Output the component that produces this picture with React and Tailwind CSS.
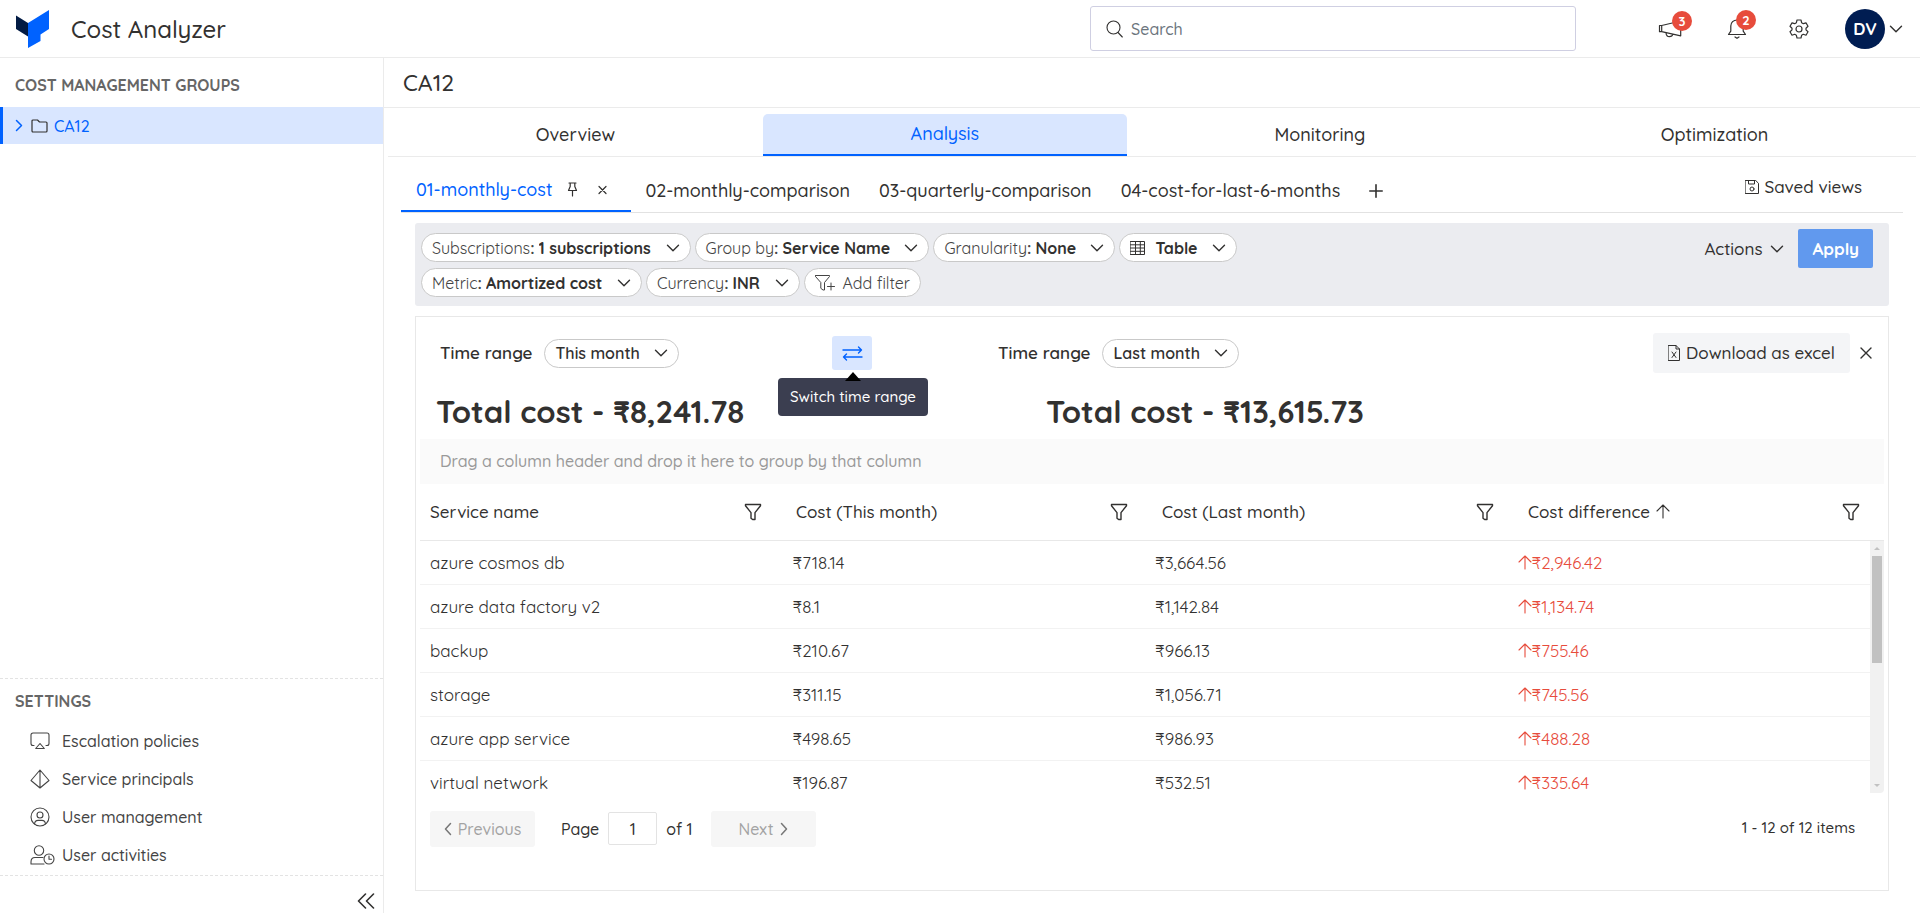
import React from 'react';

const groupTabs = ['Overview', 'Analysis', 'Monitoring', 'Optimization'];

const views = ['02-monthly-comparison', '03-quarterly-comparison', '04-cost-for-last-6-months'];

const columns = ['Service name', 'Cost (This month)', 'Cost (Last month)', 'Cost difference'];

const rows = [
  { name: 'azure cosmos db', current: '₹718.14', previous: '₹3,664.56', diff: '₹2,946.42' },
  { name: 'azure data factory v2', current: '₹8.1', previous: '₹1,142.84', diff: '₹1,134.74' },
  { name: 'backup', current: '₹210.67', previous: '₹966.13', diff: '₹755.46' },
  { name: 'storage', current: '₹311.15', previous: '₹1,056.71', diff: '₹745.56' },
  { name: 'azure app service', current: '₹498.65', previous: '₹986.93', diff: '₹488.28' },
  { name: 'virtual network', current: '₹196.87', previous: '₹532.51', diff: '₹335.64' },
];

const Icon = ({ w = 16, h = 16, sw = 1, className = '', children }) => (
  <svg
    width={w}
    height={h}
    viewBox={`0 0 ${w} ${h}`}
    fill="none"
    stroke="currentColor"
    strokeWidth={sw}
    strokeLinecap="round"
    strokeLinejoin="round"
    className={`shrink-0 ${className}`}
    aria-hidden="true"
  >
    {children}
  </svg>
);

const ChevronDown = ({ className }) => (
  <Icon w={14} h={8} sw={1.4} className={className}>
    <path d="M1.5 1.2 7 6.8l5.5-5.6" />
  </Icon>
);

const FunnelIcon = () => (
  <Icon w={18} h={18} sw={1.4}>
    <path d="M1.5 1.5h15v1.3L11 9.6v6.9H8.6L7 15.2V9.6L1.5 2.8z" />
  </Icon>
);

const ArrowUp = ({ className }) => (
  <Icon w={14} h={15} sw={1.1} className={className}>
    <path d="M7 14V1M1 7l6-6 6 6" />
  </Icon>
);

const Logo = () => (
  <svg width="33" height="38" viewBox="0 0 33 38" className="shrink-0" aria-hidden="true">
    <path d="M0 5.5 12 13v13.5L0 19z" fill="#021b44" />
    <path d="M12 13 33 0v19l-8.5 5.5V31L12 38z" fill="#0062ff" />
  </svg>
);

const settings = [
  {
    label: 'Escalation policies',
    icon: (
      <Icon w={20} h={18} sw={1.1}>
        <path d="M4 13.500H3a2 2 0 0 1-2-2V3a2 2 0 0 1 2-2h14a2 2 0 0 1 2 2v8.500a2 2 0 0 1-2 2h-1M10 11.500l4.300 5H5.700z" />
      </Icon>
    ),
  },
  {
    label: 'Service principals',
    icon: (
      <Icon w={20} h={20} sw={1.1}>
        <path d="M10 1 1 11.500 10 19l9-7.500L10 1zM10 1v18" />
      </Icon>
    ),
  },
  {
    label: 'User management',
    icon: (
      <Icon w={20} h={20} sw={1.1}>
        <circle cx="10" cy="10" r="9" />
        <circle cx="10" cy="8" r="3" />
        <path d="M4.500 17c.3-2.400 1.500-3.600 3.500-3.600h4c2 0 3.200 1.200 3.500 3.600" />
      </Icon>
    ),
  },
  {
    label: 'User activities',
    icon: (
      <Icon w={25} h={20} sw={1.1} className="-mr-[5px]">
        <circle cx="9" cy="5.500" r="4.700" />
        <path d="M14 19H1v-2c0-3 2-4.500 4-4.500h8" />
        <circle cx="19" cy="14" r="5" />
        <path d="M19 11v3.300h2.500" />
      </Icon>
    ),
  },
];

const Pill = ({ label, value, icon }) => (
  <label className="relative flex h-[29px] items-center rounded-full border border-[#c9c9c9] bg-white pl-2.5 text-base">
    {icon}
    {label && (
      <span className="mr-1 font-normal text-[#444]">
        {label}
        <span className="font-bold">:</span>
      </span>
    )}
    <select
      aria-label={label || value}
      className={`appearance-none bg-transparent pr-[38px] outline-none ${label || icon ? 'font-bold' : 'font-semibold'}`}
    >
      <option>{value}</option>
    </select>
    <ChevronDown className="pointer-events-none absolute right-2.5" />
  </label>
);

const TimeRange = ({ value }) => (
  <div className="flex items-center gap-3">
    <span className="text-[17px] font-semibold">Time range</span>
    <Pill value={value} />
  </div>
);

const Header = () => (
  <header className="flex h-[58px] items-center border-b border-[#ebebeb] pr-[17px] pl-4">
    <Logo />
    <h1 className="ml-[22px] text-2xl font-medium">Cost Analyzer</h1>
    <label className="ml-auto flex h-[45px] w-[486px] items-center gap-2 rounded-[3px] border border-[#cfcfe2] px-[15px]">
      <Icon w={17} h={18} sw={1.1}>
        <circle cx="7.500" cy="7.500" r="6.500" />
        <path d="m12 12.500 4.300 4.500" />
      </Icon>
      <input
        type="text"
        aria-label="Search"
        placeholder="Search"
        className="w-full text-base font-medium outline-none placeholder:text-[#6c757d]"
      />
    </label>
    <div className="ml-[82px] flex items-center">
      <button aria-label="Announcements" className="relative">
        <Icon w={25} h={20} sw={1.2}>
          <path d="M1.500 6.500v6.200h2.200l19 4.200V2L3.700 6.500zM3.700 6.500v6.200M8 14c.2 2.500 1.500 3.700 3.500 3.700s3-1 3.300-2.500" />
        </Icon>
        <span className="absolute -top-2 left-[14px] h-5 w-5 rounded-full bg-[#e74c3c] text-[13px] leading-5 font-bold text-white">3</span>
      </button>
      <button aria-label="Notifications" className="relative ml-11">
        <Icon w={20} h={21} sw={1.2}>
          <path d="M1.500 16.500h17l-2.300-3.300V8c0-3.500-2.700-6-6.200-6S3.800 4.500 3.800 8v5.200zM8 19l2 1.300 2-1.300" />
        </Icon>
        <span className="absolute -top-2 left-[9px] h-5 w-5 rounded-full bg-[#e74c3c] text-[13px] leading-5 font-bold text-white">2</span>
      </button>
      <button aria-label="Settings" className="ml-[42px]">
        <Icon w={20} h={20} sw={1.2}>
          <path d="M8 1h4l.6 2.700 1.700 1L17 3.900l2 3.400-2 1.900v1.700l2 1.900-2 3.400-2.700-.9-1.700 1L12 19H8l-.6-2.700-1.700-1-2.700.9-2-3.400 2-1.900V9.200L1 7.300l2-3.400 2.700.8 1.700-1z" />
          <circle cx="10" cy="10" r="3" />
        </Icon>
      </button>
      <button className="ml-9 flex items-center gap-1">
        <span className="flex h-10 w-10 items-center justify-center rounded-full bg-[#001d52] text-[17px] font-bold text-white">DV</span>
        <ChevronDown />
      </button>
    </div>
  </header>
);

const Sidebar = () => (
  <aside className="flex w-[384px] shrink-0 flex-col border-r border-[#ebebeb]">
    <h2 className="px-[15px] pt-[17px] pb-3 text-base leading-5 font-bold text-[#666]">COST MANAGEMENT GROUPS</h2>
    <a href="#ca12" className="flex h-[37px] items-center border-l-3 border-[#0062ff] bg-[#d9e6ff] pl-3 text-base font-medium text-[#0062ff]">
      <Icon w={8} h={13} sw={1.5}>
        <path d="m1.500 1.500 5 5-5 5" />
      </Icon>
      <Icon w={17} h={14} sw={1.2} className="mr-1.5 ml-2 text-[#323130]">
        <path d="M1 12V2a1 1 0 0 1 1-1h4.500l2 2H15a1 1 0 0 1 1 1v8a1 1 0 0 1-1 1H2a1 1 0 0 1-1-1z" />
      </Icon>
      CA12
    </a>
    <div className="mt-auto border-y border-dashed border-[#e3e3e3] pb-px">
      <h2 className="px-[15px] pt-3 pb-[11px] text-base leading-5 font-bold text-[#666]">SETTINGS</h2>
      <ul>
        {settings.map((item) => (
          <li key={item.label}>
            <a href="#settings" className="flex h-[38px] items-center gap-3 pl-[30px] text-base font-medium text-[#444]">
              {item.icon}
              {item.label}
            </a>
          </li>
        ))}
      </ul>
    </div>
    <div className="flex h-[37px] items-center justify-end pt-3 pr-2">
      <button aria-label="Collapse sidebar">
        <Icon w={18} h={16} sw={1.6}>
          <path d="M8.500 1 1.500 8l7 7M16.500 1l-7 7 7 7" />
        </Icon>
      </button>
    </div>
  </aside>
);

const GroupTabs = () => (
  <nav className="mr-1 ml-1 flex h-[49px] border-b border-[#ebebeb] pt-1.5">
    {groupTabs.map((tab) => (
      <button
        key={tab}
        className={`flex-auto text-lg font-medium ${
          tab === 'Analysis' ? 'rounded-t-[5px] border-b-2 border-[#0062ff] bg-[#d9e6ff] text-[#0062ff]' : ''
        }`}
      >
        {tab}
      </button>
    ))}
  </nav>
);

const ViewTabs = () => (
  <div className="mr-[17px] ml-[17px] flex h-14 items-end border-b border-[#e2e2e2] text-lg font-medium">
    <div className="flex h-[43px] items-center border-b-2 border-[#0062ff] pr-6 pl-[15px]">
      <button className="text-[#0062ff]">01-monthly-cost</button>
      <button aria-label="Pin view" className="ml-[15px]">
        <Icon w={11} h={15} sw={1.2}>
          <path d="M2 1h7M3.200 1v3.500L1.500 8.500h8L7.800 4.500V1M5.500 8.500V14" />
        </Icon>
      </button>
      <button aria-label="Close view" className="ml-5">
        <Icon w={9} h={10} sw={1.2}>
          <path d="m1 1.500 7 7M8 1.500l-7 7" />
        </Icon>
      </button>
    </div>
    <div className="ml-[14px] flex h-[42px] items-center gap-[29px]">
      {views.map((view) => (
        <button key={view}>{view}</button>
      ))}
      <button aria-label="Add view">
        <Icon w={14} h={14} sw={1.6}>
          <path d="M7 .8v12.400M.8 7h12.400" />
        </Icon>
      </button>
    </div>
    <button className="mr-[41px] ml-auto flex h-[50px] items-center gap-1.5 text-[17px]">
      <Icon w={14} h={14}>
        <path d="M.5.5h10.200l2.800 2.800v10.200H.5zM3.500.5v3.500h6V.5" />
        <circle cx="7" cy="9" r="2" />
      </Icon>
      Saved views
    </button>
  </div>
);

const FilterBar = () => (
  <section className="mt-2.5 mr-[31px] ml-[31px] flex items-start justify-between rounded-[3px] bg-[#ebecf0] pt-1.5 pr-4 pb-[9px] pl-1.5">
    <div className="flex flex-col gap-1.5 pt-1">
      <div className="flex gap-1">
        <Pill label="Subscriptions" value="1 subscriptions" />
        <Pill label="Group by" value="Service Name" />
        <Pill label="Granularity" value="None" />
        <Pill
          value="Table"
          icon={
            <Icon w={15} h={14} className="mr-2.5">
              <path d="M.5.5h14v13H.5zM.5 3.800h14M.5 7h14M.5 10.300h14M5.500.5v13M10.300.5v13" />
            </Icon>
          }
        />
      </div>
      <div className="flex gap-1">
        <Pill label="Metric" value="Amortized cost" />
        <Pill label="Currency" value="INR" />
        <button className="flex h-[29px] items-center gap-2 rounded-full border border-[#c9c9c9] bg-white px-2.5 text-base text-[#444]">
          <Icon w={20} h={16}>
            <path d="M.5.5h14v1L9.500 7.500V15H8l-2.200-1.700V7.500L.5 1.500zM12.500 11.500h7M16 8v7" />
          </Icon>
          Add filter
        </button>
      </div>
    </div>
    <div className="flex items-center gap-3.5">
      <button className="flex items-center gap-2 text-[17px] font-medium">
        Actions
        <ChevronDown />
      </button>
      <button className="h-[39px] rounded-[2px] bg-[#6199ee] px-3.5 text-[17px] font-bold text-white">Apply</button>
    </div>
  </section>
);

const CostTable = () => (
  <div className="mx-1">
    <p className="mt-[7px] h-[45px] bg-[#fafafa] px-5 text-base leading-[45px] font-medium text-[#999]">
      Drag a column header and drop it here to group by that column
    </p>
    <table className="w-full table-fixed">
      <thead>
        <tr className="h-14 border-b border-[#e8e8e8]">
          {columns.map((col) => (
            <th key={col} scope="col" className="pr-6 pl-2.5 text-left text-[17px] font-medium">
              <div className="flex items-center justify-between">
                <span className="flex items-center gap-1.5">
                  {col}
                  {col === 'Cost difference' && <ArrowUp />}
                </span>
                <button aria-label={`Filter ${col}`}>
                  <FunnelIcon />
                </button>
              </div>
            </th>
          ))}
        </tr>
      </thead>
    </table>
    <div className="flex h-[252px] overflow-hidden">
      <div className="flex-1">
        <table className="w-full table-fixed text-[17px]">
          <tbody>
            {rows.map((row) => (
              <tr key={row.name} className="h-11 border-b border-[#f2f2f2] last:border-b-0">
                <td className="pl-2.5">{row.name}</td>
                <td className="pl-2.5">{row.current}</td>
                <td className="pl-2.5">{row.previous}</td>
                <td className="pl-2.5 text-[#e74c3c]">
                  <span className="flex items-center">
                    <ArrowUp />
                    {row.diff}
                  </span>
                </td>
              </tr>
            ))}
          </tbody>
        </table>
      </div>
      <div className="flex w-3.5 flex-col items-center rounded-br bg-[#f1f1f1] py-1.5">
        <span className="border-x-3 border-b-3 border-x-transparent border-b-[#c1c1c1]" />
        <span className="mt-1.5 h-[107px] w-2.5 bg-[#c1c1c1]" />
        <span className="mt-auto border-x-3 border-t-3 border-x-transparent border-t-[#c1c1c1]" />
      </div>
    </div>
  </div>
);

const Pager = () => (
  <div className="mt-[18px] flex items-center pr-[33px] pl-3.5 text-base font-medium">
    <button disabled className="flex h-9 w-[105px] items-center justify-center gap-1.5 rounded-[3px] bg-[#f6f6f6] text-[#a3a3a3]">
      <Icon w={8} h={14} sw={1.5} className="text-[#777]">
        <path d="M6.500 1.500 1.500 7l5 5.500" />
      </Icon>
      Previous
    </button>
    <label className="ml-[26px] flex items-center gap-[9px]">
      Page
      <input
        type="text"
        defaultValue="1"
        className="h-[33px] w-[49px] rounded-[2px] border border-[#e3e3e3] text-center outline-none"
      />
    </label>
    <span className="ml-[9px]">of 1</span>
    <button disabled className="ml-[18px] flex h-9 w-[105px] items-center justify-center gap-1.5 rounded-[3px] bg-[#f6f6f6] text-[#a3a3a3]">
      Next
      <Icon w={8} h={14} sw={1.5} className="text-[#777]">
        <path d="m1.500 1.500 5 5.500-5 5.500" />
      </Icon>
    </button>
    <span className="ml-auto text-[15px]">1 - 12 of 12 items</span>
  </div>
);

const CostCard = () => (
  <section className="mt-2.5 mr-[31px] mb-[22px] ml-[31px] flex-1 border border-[#e8e8e8]">
    <div className="flex pt-4 pr-4 pl-6">
      <div className="flex w-[392px] items-center">
        <TimeRange value="This month" />
      </div>
      <div className="relative flex w-[166px] items-center">
        <button aria-label="Switch time range" className="flex h-[34px] w-10 items-center justify-center rounded-[3px] bg-[#d9e6ff] text-[#0062ff]">
          <Icon w={21} h={15} sw={1.4}>
            <path d="M1 4h18.500M16.500 1l3 3-3 3M20 11H1.500M4.500 8l-3 3 3 3" />
          </Icon>
        </button>
        <div className="absolute top-[45px] -left-[54px] rounded-[4px] bg-[#3b3e50] px-3 text-[15px] leading-[38px] font-medium whitespace-nowrap text-white">
          <span className="absolute -top-1.5 left-1/2 -ml-2 border-x-8 border-b-9 border-x-transparent border-b-black" />
          Switch time range
        </div>
      </div>
      <TimeRange value="Last month" />
      <button className="ml-auto flex h-10 items-center gap-1.5 rounded-[3px] bg-[#f4f5f7] px-[15px] text-[17px] font-medium">
        <Icon w={12} h={16}>
          <path d="M.5.5h7.500l3.500 3.500v11.500H.5zM8 .5V4h3.500M4 7l4 5.500M8 7l-4 5.500" />
        </Icon>
        Download as excel
      </button>
      <button aria-label="Close" className="ml-2.5">
        <Icon w={12} h={12} sw={1.4}>
          <path d="m1 1 10 10M11 1 1 11" />
        </Icon>
      </button>
    </div>
    <div className="mt-[18px] flex pl-5 text-[31px] leading-[41px] font-bold">
      <h2 className="w-[610px]">Total cost - ₹8,241.78</h2>
      <h2>Total cost - ₹13,615.73</h2>
    </div>
    <CostTable />
    <Pager />
  </section>
);

export default function App() {
  return (
    <div className="flex min-h-screen flex-col bg-white font-['Quicksand','Open_Sans',sans-serif] text-[#323130]">
      <Header />
      <div className="flex flex-1">
        <Sidebar />
        <main className="flex min-w-0 flex-1 flex-col">
          <h2 className="h-[50px] border-b border-[#ebebeb] pl-[19px] text-[23px] leading-[50px] font-medium">CA12</h2>
          <GroupTabs />
          <ViewTabs />
          <FilterBar />
          <CostCard />
        </main>
      </div>
    </div>
  );
}
